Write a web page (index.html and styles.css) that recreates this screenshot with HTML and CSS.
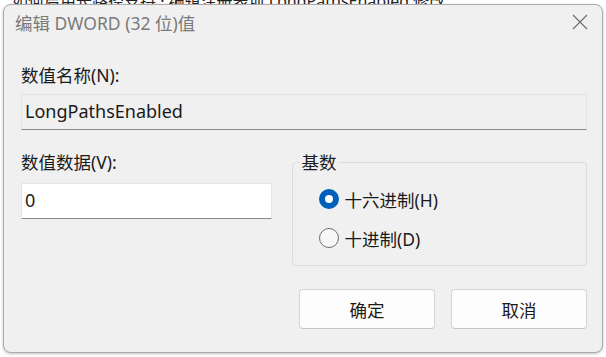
FILE: index.html
```html
<!DOCTYPE html>
<html lang="zh-CN">
<head>
  <meta charset="UTF-8">
  <meta name="viewport" content="width=device-width, initial-scale=1.0">
  <title>编辑 DWORD (32 位)值</title>
  <link rel="stylesheet" href="styles.css">
</head>
<body>
  <p class="behind">如何启用长路径支持 · 编辑注册表项 LongPathsEnabled 修改</p>
  <div class="dialog">
    <div class="titlebar">
      <span class="title">编辑 DWORD (32 位)值</span>
      <svg class="close" width="16" height="16" viewBox="0 0 16 16">
        <path d="M1 1 L15 15 M15 1 L1 15" stroke="#6b6b6b" stroke-width="1.1" fill="none"/>
      </svg>
    </div>
    <div class="content">
      <p class="label">数值名称(N):</p>
      <div class="field readonly">LongPathsEnabled</div>
      <div class="row">
        <div class="col-left">
          <p class="label">数值数据(V):</p>
          <div class="field edit">0</div>
        </div>
        <fieldset class="base">
          <legend>基数</legend>
          <div class="radio checked"><span class="dot"></span>十六进制(H)</div>
          <div class="radio"><span class="dot"></span>十进制(D)</div>
        </fieldset>
      </div>
      <div class="btns">
        <button class="btn">确定</button>
        <button class="btn">取消</button>
      </div>
    </div>
  </div>
</body>
</html>
```

FILE: styles.css
```css
body {
  margin: 0;
  width: 606px;
  height: 357px;
  overflow: hidden;
  background: #ffffff;
  font-family: "Noto Sans", "Noto Sans CJK SC", sans-serif;
  position: relative;
}
.behind {
  margin: -12px 0 0 12px;
  font-size: 16px;
  color: #222;
}
.dialog {
  position: absolute;
  left: 3px;
  top: 4px;
  width: 598px;
  height: 347px;
  border: 1px solid #ababab;
  border-radius: 8px;
  background: #f0f0f0;
  box-shadow: 0 1px 3px rgba(0, 0, 0, 0.25);
}
.titlebar {
  height: 38px;
  display: flex;
  align-items: center;
  justify-content: space-between;
  padding: 0 14px 0 11px;
}
.title {
  font-size: 17.5px;
  color: #7a7a7a;
  margin-top: -4px;
}
.close {
  margin-top: -5px;
}
.content {
  padding: 21px 15px 0 17px;
}
p {
  margin: 0;
}
.label {
  font-size: 17.5px;
  line-height: 22px;
  color: #1a1a1a;
}
.field {
  height: 36px;
  box-sizing: border-box;
  font-size: 18px;
  line-height: 33px;
  padding-left: 3px;
  color: #1a1a1a;
}
.readonly {
  margin-top: 8px;
  background: #f0f0f0;
  border: 1px solid #e3e3e3;
  border-bottom: 1px solid #8a8a8a;
}
.edit {
  margin-top: 10px;
  background: #ffffff;
  border: 1px solid #e5e5e5;
  border-bottom: 1px solid #8a8a8a;
}
.row {
  display: flex;
  margin-top: 21px;
}
.col-left {
  width: 251px;
}
.base {
  margin: 1px 0 0 20px;
  width: 296px;
  height: 114px;
  box-sizing: border-box;
  border: 1px solid #dcdcdc;
  border-radius: 4px;
  padding: 0 0 0 26px;
}
.base legend {
  font-size: 17.5px;
  color: #1a1a1a;
  padding: 0 2px;
  margin-left: -19px;
  line-height: 20px;
}
.radio {
  display: flex;
  align-items: center;
  font-size: 17.5px;
  color: #1a1a1a;
  height: 20px;
  margin-top: 17px;
}
.radio + .radio {
  margin-top: 19px;
}
.dot {
  width: 20px;
  height: 20px;
  box-sizing: border-box;
  border: 1px solid #6e6e6e;
  border-radius: 50%;
  margin-right: 6px;
  background: #f7f7f7;
}
.checked .dot {
  border: 6px solid #005fb8;
  background: #ffffff;
}
.btns {
  display: flex;
  justify-content: flex-end;
  gap: 16px;
  margin-top: 23px;
}
.btn {
  width: 136px;
  height: 40px;
  background: #fdfdfd;
  border: 1px solid #d4d4d4;
  border-bottom-color: #c4c4c4;
  border-radius: 4px;
  font-family: "Noto Sans CJK SC", sans-serif;
  font-size: 17.5px;
  color: #1a1a1a;
}
```
